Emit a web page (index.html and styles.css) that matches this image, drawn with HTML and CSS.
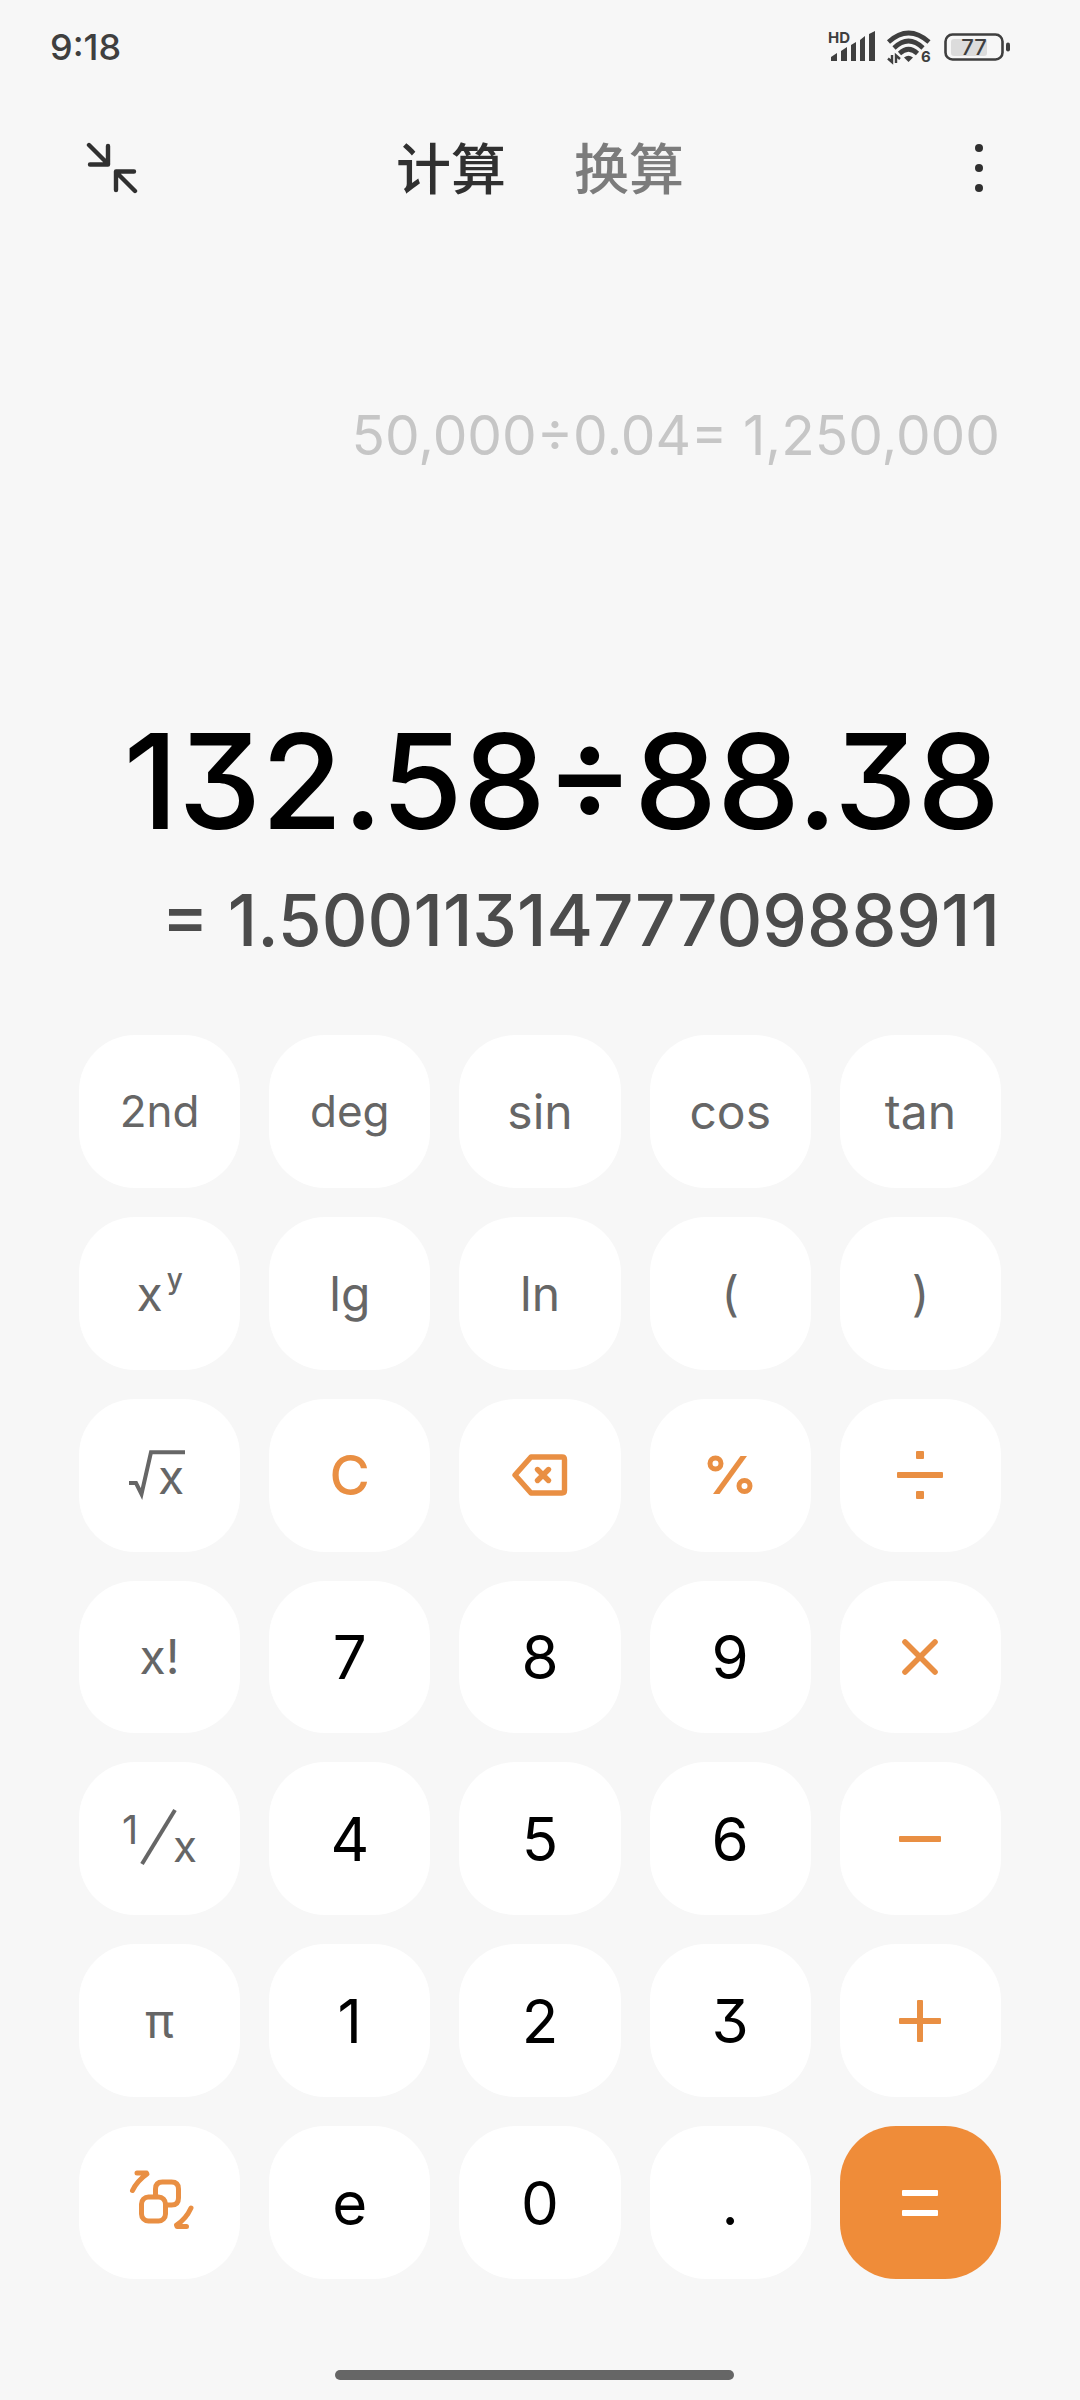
FILE: index.html
```
<!DOCTYPE html>
<html lang="zh-CN">
<head>
  <meta charset="UTF-8" />
  <meta name="viewport" content="width=device-width, initial-scale=1.0" />
  <title>计算器</title>
  <link rel="stylesheet" href="styles.css">
</head>
<body>
  <div class="app">
    <div class="status-bar">
      <span class="time">9:18</span>
      <div class="status-icons">
        <!-- Mobile signal -->
        <svg width="50" height="44" viewBox="-3 -6 50 44">
          <text x="-1" y="12" class="hd">HD</text>
          <path d="M2 30V26L8 22V30ZM12 30V20L18 16V30ZM22 30V14L27 11V30ZM31 30V9L36 5V30ZM40 30V3L46 0V30Z" fill="#3f3f3f" />
        </svg>
        <!-- Wi-Fi -->
        <svg width="50" height="44" viewBox="-2 -5 50 44">
          <g fill="none" stroke="#3f3f3f" stroke-width="4.6">
            <path d="M1.5 12Q21.5 -6 42 12" />
            <path d="M7 18Q21.5 4 36 18" />
            <path d="M12.5 23.5Q21.5 15 30.5 23.5" />
          </g>
          <path d="M17 27.5Q21.5 24 26 27.5L21.5 32Z" fill="#3f3f3f" />
          <path d="M5 25V32L1 28.5M9 33V25.5L13 29" fill="none" stroke="#3f3f3f" stroke-width="2.4" />
          <text x="34" y="32" class="wifi-gen">6</text>
        </svg>
        <!-- Battery -->
        <svg width="66" height="30" viewBox="0 0 66 30">
          <rect x="1.5" y="2.5" width="57" height="25" rx="7" fill="none" stroke="#3f3f3f" stroke-width="2.6" />
          <rect x="7" y="7" width="36" height="17" rx="3" fill="#dcdcdc" />
          <rect x="62" y="10.5" width="4" height="9" rx="2" fill="#3f3f3f" />
          <text x="30" y="23" text-anchor="middle" class="battery-level">77</text>
        </svg>
      </div>
    </div>

    <header class="app-bar">
      <button class="icon-btn" aria-label="小窗">
        <svg width="52" height="52" viewBox="0 0 52 52" fill="none" stroke="#303030" stroke-width="4.4" stroke-linecap="round" stroke-linejoin="round">
          <path d="M3 3L22 22M22 4V22.5H4" />
          <path d="M49 49L30 30M30 48V29.5H48" />
        </svg>
      </button>
      <nav class="tabs">
        <button class="tab active">计算</button>
        <button class="tab">换算</button>
      </nav>
      <button class="icon-btn more" aria-label="更多">
        <svg width="8" height="50" viewBox="0 0 8 50" fill="#303030">
          <circle cx="4" cy="5" r="4" />
          <circle cx="4" cy="25" r="4" />
          <circle cx="4" cy="45" r="4" />
        </svg>
      </button>
    </header>

    <main class="display">
      <div class="history">50,000÷0.04= 1,250,000</div>
      <div class="expression">132.58÷88.38</div>
      <output class="result">= 1.500113147770988911</output>
    </main>

    <div class="keypad">
      <button class="key fn small">2nd</button>
      <button class="key fn small">deg</button>
      <button class="key fn">sin</button>
      <button class="key fn">cos</button>
      <button class="key fn">tan</button>

      <button class="key fn">x<sup>y</sup></button>
      <button class="key fn">lg</button>
      <button class="key fn">ln</button>
      <button class="key fn">(</button>
      <button class="key fn">)</button>

      <button class="key fn" aria-label="平方根">
        <svg width="62" height="73" viewBox="0 -11 62 73">
          <path d="M0 33H7L12.5 44L22 2.3H56" fill="none" stroke="#666" stroke-width="4" />
          <text x="29" y="44" class="radicand">x</text>
        </svg>
      </button>
      <button class="key op clear">C</button>
      <button class="key op" aria-label="退格">
        <svg width="56" height="42" viewBox="0 0 56 42" fill="none" stroke="currentColor" stroke-width="5.4" stroke-linejoin="round" stroke-linecap="round">
          <path d="M19 3H50Q52.5 3 52.5 5.5V36.5Q52.5 39 50 39H19L3 21Z" />
          <path d="M25.5 15.5L36.5 26.5M36.5 15.5L25.5 26.5" />
        </svg>
      </button>
      <button class="key op" aria-label="百分号">
        <svg width="46" height="40" viewBox="0 0 46 40">
          <g fill="none" stroke="currentColor" stroke-width="5">
            <circle cx="8.5" cy="8.5" r="5.5" />
            <circle cx="37.5" cy="31" r="5.5" />
          </g>
          <path d="M33.5 1H40L12.5 39H6Z" fill="currentColor" />
        </svg>
      </button>
      <button class="key op" aria-label="除">
        <svg width="46" height="48" viewBox="0 0 46 48" fill="currentColor">
          <rect x="0" y="21" width="46" height="6" rx="1" />
          <rect x="19" y="0" width="8" height="8" rx="1" />
          <rect x="19" y="40" width="8" height="8" rx="1" />
        </svg>
      </button>

      <button class="key fn">x!</button>
      <button class="key">7</button>
      <button class="key">8</button>
      <button class="key">9</button>
      <button class="key op" aria-label="乘">
        <svg width="36" height="36" viewBox="0 0 36 36" stroke="currentColor" stroke-width="5.6">
          <path d="M3 3L33 33M33 3L3 33" stroke-linecap="round" />
        </svg>
      </button>

      <button class="key fn" aria-label="倒数">
        <svg width="83" height="71" viewBox="-7 -7 83 71">
          <text x="-3" y="34" class="numerator">1</text>
          <path d="M17 54L50 0" stroke="#666" stroke-width="4" />
          <text x="48" y="52" class="denominator">x</text>
        </svg>
      </button>
      <button class="key">4</button>
      <button class="key">5</button>
      <button class="key">6</button>
      <button class="key op" aria-label="减">
        <svg width="42" height="6" viewBox="0 0 42 6" fill="currentColor">
          <rect width="42" height="6" rx="1" />
        </svg>
      </button>

      <button class="key fn">π</button>
      <button class="key">1</button>
      <button class="key">2</button>
      <button class="key">3</button>
      <button class="key op" aria-label="加">
        <svg width="42" height="42" viewBox="0 0 42 42" fill="currentColor">
          <rect x="0" y="18" width="42" height="6" rx="1" />
          <rect x="18" y="0" width="6" height="42" rx="1" />
        </svg>
      </button>

      <button class="key op" aria-label="切换键盘">
        <svg width="69" height="65" viewBox="-4 1 69 65" fill="none" stroke="currentColor" stroke-width="5" stroke-linecap="round" stroke-linejoin="round">
          <rect x="12.5" y="28" width="24" height="24" rx="7" />
          <path d="M26.5 27V20Q26.5 13 33.5 13H42.5Q49.5 13 49.5 20V29Q49.5 36 42.5 36H38" />
          <path d="M3.5 21.5Q8 12 18 5L17.5 4H8" />
          <path d="M62 39Q57 50 47.5 56L48 57.5H57.5" />
        </svg>
      </button>
      <button class="key">e</button>
      <button class="key">0</button>
      <button class="key">.</button>
      <button class="key equals" aria-label="等于">
        <svg width="36" height="26" viewBox="0 0 36 26" fill="currentColor">
          <rect x="0" y="0" width="36" height="6" rx="1" />
          <rect x="0" y="20" width="36" height="6" rx="1" />
        </svg>
      </button>
    </div>

    <div class="home-bar"></div>
  </div>
</body>
</html>
```
FILE: styles.css
```
* {
  box-sizing: border-box;
}
body {
  margin: 0;
  background-color: #f7f7f7;
  font-family: Inter, "Noto Sans CJK SC", sans-serif;
  font-feature-settings: "cv09";
  color: #000;
}
button {
  margin: 0;
  padding: 0;
  border: none;
  background: none;
  font: inherit;
  font-feature-settings: inherit;
  color: inherit;
  cursor: pointer;
}
svg {
  display: block;
}
.app {
  display: flex;
  flex-direction: column;
  min-height: 100vh;
}

/* System status bar */
.status-bar {
  display: flex;
  justify-content: space-between;
  align-items: center;
  height: 94px;
  padding: 0 70px 0 50px;
  color: #3f3f3f;
}
.time {
  font-size: 36px;
  font-weight: 500;
}
.status-icons {
  display: flex;
  align-items: center;
  gap: 9px;
}
.status-icons text {
  fill: #3f3f3f;
}
.hd {
  font-size: 15px;
  font-weight: 700;
}
.wifi-gen {
  font-size: 15px;
  font-weight: 700;
}
.battery-level {
  font-size: 22px;
  font-weight: 500;
}

/* Top bar with the two modes */
.app-bar {
  display: flex;
  justify-content: space-between;
  align-items: center;
  height: 148px;
  padding: 0 65px 0 86px;
}
.icon-btn {
  display: flex;
  justify-content: center;
}
.icon-btn.more {
  width: 73px;
}
.tabs {
  display: flex;
  gap: 68px;
  padding-bottom: 6px;
}
.tab {
  font-family: "Noto Sans CJK SC", sans-serif;
  font-size: 55px;
  font-weight: 500;
  line-height: 80px;
  color: #7c7c7c;
}
.tab.active {
  color: #303030;
}

/* History, current expression and running result */
.display {
  display: flex;
  flex-direction: column;
  align-items: flex-end;
  padding: 153px 80px 65px;
  white-space: nowrap;
}
.history {
  margin-bottom: 226px;
  font-size: 55px;
  line-height: 80px;
  color: #c6c6c6;
}
.expression {
  font-size: 132px;
  font-weight: 500;
  line-height: 160px;
}
.result {
  margin-top: 9px;
  font-size: 71px;
  font-weight: 500;
  line-height: 100px;
  color: #4b4b4b;
}

/* Keys */
.keypad {
  flex: 1;
  display: grid;
  grid-template-columns: repeat(5, 1fr);
  grid-auto-rows: 1fr;
  gap: 29px;
  padding: 0 79px;
}
.key {
  display: flex;
  justify-content: center;
  align-items: center;
  min-height: 120px;
  border-radius: 56px;
  background-color: #fff;
  font-size: 60px;
}
.key.fn {
  font-size: 48px;
  color: #666;
}
.key.fn.small {
  font-size: 44px;
}
.key sup {
  margin: 0 0 28px 4px;
  font-size: 28px;
  font-weight: 500;
  line-height: 28px;
}
.key.op {
  color: #e98f43;
}
.key.clear {
  font-size: 55px;
  font-weight: 500;
}
.key.equals {
  background-color: #ef8c39;
  color: #fff;
}
.key text {
  fill: #666;
}
.radicand {
  font-size: 48px;
}
.numerator {
  font-size: 40px;
}
.denominator {
  font-size: 44px;
}

/* Gesture handle */
.home-bar {
  width: 37%;
  height: 10px;
  margin: 91px auto 20px 31%;
  border-radius: 5px;
  background-color: #666;
}
```
